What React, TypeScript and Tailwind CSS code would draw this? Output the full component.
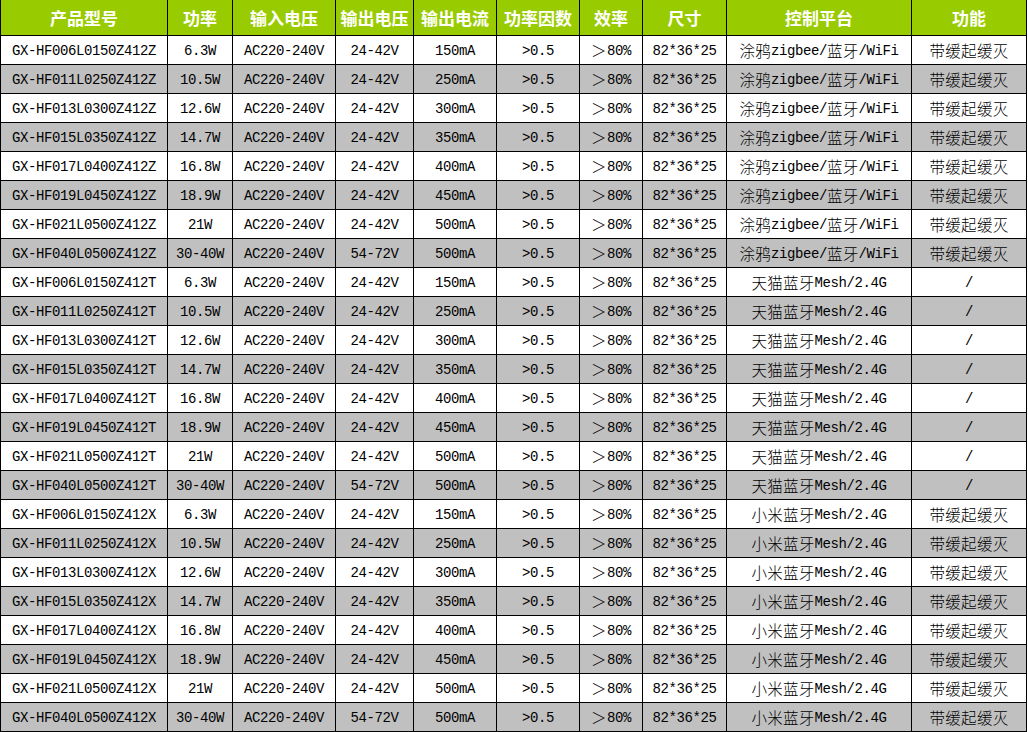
import React from 'react';

const headers = ['产品型号', '功率', '输入电压', '输出电压', '输出电流', '功率因数', '效率', '尺寸', '控制平台', '功能'];

const specs = [
  { code: '006L0150', power: '6.3W', out: '24-42V', current: '150mA' },
  { code: '011L0250', power: '10.5W', out: '24-42V', current: '250mA' },
  { code: '013L0300', power: '12.6W', out: '24-42V', current: '300mA' },
  { code: '015L0350', power: '14.7W', out: '24-42V', current: '350mA' },
  { code: '017L0400', power: '16.8W', out: '24-42V', current: '400mA' },
  { code: '019L0450', power: '18.9W', out: '24-42V', current: '450mA' },
  { code: '021L0500', power: '21W', out: '24-42V', current: '500mA' },
  { code: '040L0500', power: '30-40W', out: '54-72V', current: '500mA' },
];

const series = [
  { suffix: 'Z', platform: '涂鸦zigbee/蓝牙/WiFi', feature: '带缓起缓灭' },
  { suffix: 'T', platform: '天猫蓝牙Mesh/2.4G', feature: '/' },
  { suffix: 'X', platform: '小米蓝牙Mesh/2.4G', feature: '带缓起缓灭' },
];

const rows = series.flatMap((s) =>
  specs.map((p) => [
    `GX-HF${p.code}Z412${s.suffix}`,
    p.power,
    'AC220-240V',
    p.out,
    p.current,
    '>0.5',
    '＞80%',
    '82*36*25',
    s.platform,
    s.feature,
  ])
);

// CJK runs get their own size, latin runs stay on the half-width mono face
function Mixed({ text }: { text: string }) {
  const parts = text.split(/([\u3000-\u9fff\uff00-\uffef]+)/).filter(Boolean);
  return (
    <>
      {parts.map((part, i) =>
        /[\u3000-\u9fff\uff00-\uffef]/.test(part) ? (
          <span key={i} className="font-['Noto_Sans_CJK_SC',sans-serif] text-[15.5px] font-light tracking-[0.3px]">
            {part}
          </span>
        ) : (
          <span key={i} className="font-['Liberation_Mono','Noto_Sans_CJK_SC',monospace] text-[14px] tracking-[-0.4px]">
            {part}
          </span>
        )
      )}
    </>
  );
}

export default function App() {
  return (
    <div className="min-h-[732px] w-[1028px] bg-white">
      <div className="grid w-[1027px] grid-cols-[166px_64px_102px_77px_82px_82px_62px_83px_184px_114px] grid-rows-[35px] auto-rows-[28px] gap-px bg-black px-px pb-px">
        {headers.map((h) => (
          <div
            key={h}
            className="flex items-center justify-center bg-[#99cc00] font-['Noto_Sans_CJK_SC',sans-serif] text-[17px] font-bold leading-none text-white"
          >
            {h}
          </div>
        ))}
        {rows.map((row, r) =>
          row.map((cell, c) => (
            <div
              key={`${r}-${c}`}
              className={`flex items-center justify-center whitespace-nowrap pt-[2px] leading-none text-black ${
                r % 2 === 1 ? 'bg-[#c0c0c0]' : 'bg-white'
              }`}
            >
              <Mixed text={cell} />
            </div>
          ))
        )}
      </div>
    </div>
  );
}
